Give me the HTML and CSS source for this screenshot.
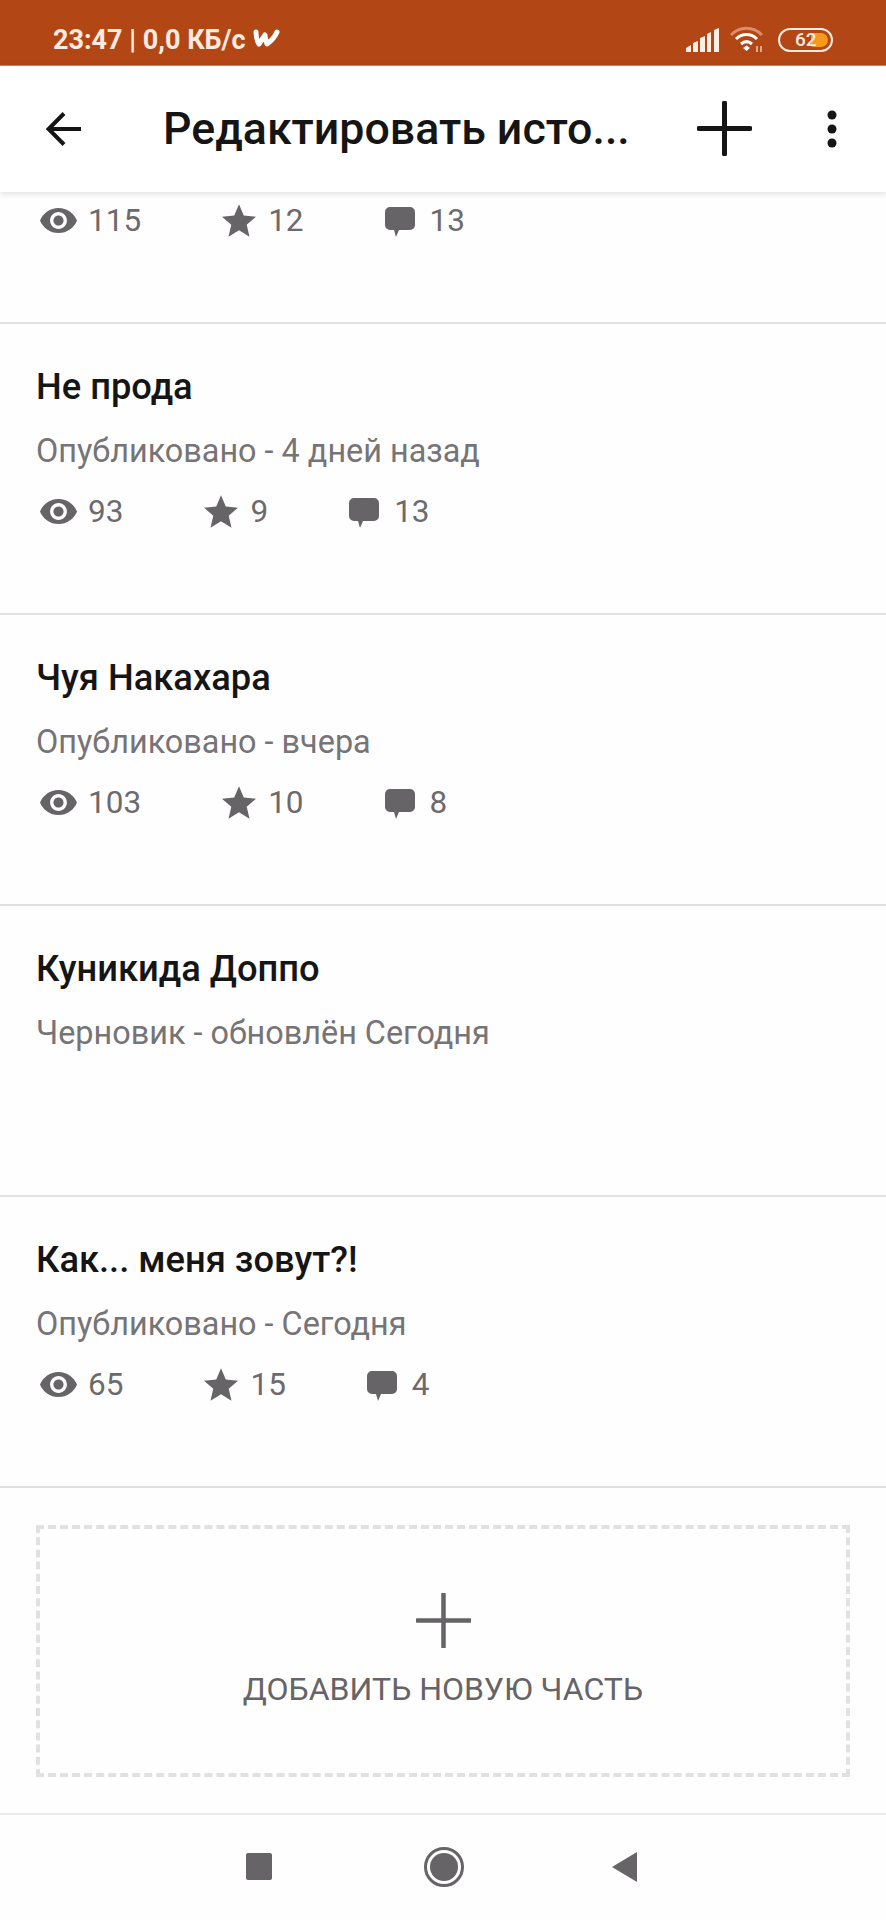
FILE: index.html
```html
<!DOCTYPE html>
<html lang="ru">

<head>
    <meta charset="UTF-8">
    <meta name="viewport" content="width=device-width, initial-scale=1.0">
    <title>Редактировать историю</title>
    <link rel="stylesheet" href="styles.css">
</head>

<body>

    <svg class="sprite" aria-hidden="true">
        <symbol id="eye" viewBox="1 4.5 22 15">
            <path d="M12 4.5C7 4.5 2.73 7.61 1 12c1.73 4.39 6 7.5 11 7.5s9.27-3.11 11-7.5c-1.73-4.39-6-7.5-11-7.5zM12 17c-2.76 0-5-2.24-5-5s2.24-5 5-5 5 2.24 5 5-2.24 5-5 5zm0-8c-1.66 0-3 1.34-3 3s1.34 3 3 3 3-1.34 3-3-1.34-3-3-3z"/>
        </symbol>
        <symbol id="star" viewBox="2 2 20 19">
            <path d="M12 17.27L18.18 21l-1.64-7.03L22 9.24l-7.19-.61L12 2 9.19 8.63 2 9.24l5.46 4.73L5.82 21z"/>
        </symbol>
        <symbol id="comment" viewBox="0 0 30 30">
            <path d="M5 0h20a5 5 0 0 1 5 5v13a5 5 0 0 1-5 5H14l-3 7-2-7H5a5 5 0 0 1-5-5V5a5 5 0 0 1 5-5z"/>
        </symbol>
    </svg>

    <!-- Status bar -->
    <div class="status-bar">
        <div class="status-left">
            <span>23:47 | 0,0 КБ/с</span>
            <svg class="logo" viewBox="0 0 27 18"><path d="M3 3c0 5 1 9 3 12 2-3 4-6 6-9 0 3 1 6 2 9 4-3 8-7 10-12" fill="none" stroke="#fff" stroke-width="5" stroke-linejoin="round" stroke-linecap="round"/></svg>
        </div>
        <div class="status-right">
            <svg class="signal" viewBox="0 0 33 24">
                <path d="M0 24v-4l5-3v7zM7 24v-9l5-2v11zM14 24V10l5-2v16zM21 24V6l4-2v20zM28 24V2l5-2v24z" fill="#fbeee4"/>
            </svg>
            <svg class="wifi" viewBox="0 0 33 28">
                <path d="M1 9c9-9 22-9 31 0" fill="none" stroke="#d98f6e" stroke-width="3"/>
                <path d="M6 13c6-6 15-6 21 0M11 18c3.500-3 7.500-3 11 0" fill="none" stroke="#fff" stroke-width="3"/>
                <path d="M13 22l3.500-2.500 3.500 2.500-3.500 3z" fill="#fff"/>
                <path d="M27 20v6M31 20v6" stroke="#eec9b4" stroke-width="1.500"/>
            </svg>
            <div class="battery">
                <div class="battery-fill"></div>
                <span class="battery-num">62</span>
            </div>
        </div>
    </div>

    <!-- Toolbar -->
    <header class="toolbar">
        <svg class="back-icon" viewBox="0 0 36 34"><path d="M35 17H3M18 1.500L2.500 17 18 32.500" fill="none" stroke="#151515" stroke-width="4"/></svg>
        <h1 class="toolbar-title">Редактировать исто...</h1>
        <svg class="plus-icon" viewBox="0 0 55 55"><path d="M27.500 2v51M2 27.500h51" fill="none" stroke="#151515" stroke-width="5" stroke-linecap="round"/></svg>
        <svg class="more-icon" viewBox="0 0 10 38"><circle cx="5" cy="5" r="4.500"/><circle cx="5" cy="19" r="4.500"/><circle cx="5" cy="33" r="4.500"/></svg>
    </header>

    <!-- Parts -->
    <main class="parts">
        <div class="part part-cut">
            <div class="stats">
                <span class="stat stat-views"><svg><use href="#eye"/></svg>115</span>
                <span class="stat stat-stars"><svg><use href="#star"/></svg>12</span>
                <span class="stat stat-comments"><svg><use href="#comment"/></svg>13</span>
            </div>
        </div>
        <div class="part">
            <div class="part-title">Не прода</div>
            <div class="part-sub">Опубликовано - 4 дней назад</div>
            <div class="stats">
                <span class="stat stat-views"><svg><use href="#eye"/></svg>93</span>
                <span class="stat stat-stars"><svg><use href="#star"/></svg>9</span>
                <span class="stat stat-comments"><svg><use href="#comment"/></svg>13</span>
            </div>
        </div>
        <div class="part">
            <div class="part-title">Чуя Накахара</div>
            <div class="part-sub">Опубликовано - вчера</div>
            <div class="stats">
                <span class="stat stat-views"><svg><use href="#eye"/></svg>103</span>
                <span class="stat stat-stars"><svg><use href="#star"/></svg>10</span>
                <span class="stat stat-comments"><svg><use href="#comment"/></svg>8</span>
            </div>
        </div>
        <div class="part">
            <div class="part-title">Куникида Доппо</div>
            <div class="part-sub">Черновик - обновлён Сегодня</div>
        </div>
        <div class="part">
            <div class="part-title">Как... меня зовут?!</div>
            <div class="part-sub">Опубликовано - Сегодня</div>
            <div class="stats">
                <span class="stat stat-views"><svg><use href="#eye"/></svg>65</span>
                <span class="stat stat-stars"><svg><use href="#star"/></svg>15</span>
                <span class="stat stat-comments"><svg><use href="#comment"/></svg>4</span>
            </div>
        </div>

        <div class="add-part">
            <svg class="add-icon" viewBox="0 0 55 55"><path d="M27.500 1v53M1 27.500h53" fill="none" stroke="#666466" stroke-width="4.500" stroke-linecap="round"/></svg>
            <div class="add-label">ДОБАВИТЬ НОВУЮ ЧАСТЬ</div>
        </div>
    </main>

    <!-- Android nav bar -->
    <footer class="nav-bar">
        <svg class="nav-square" viewBox="0 0 26 27"><rect width="26" height="27" rx="2"/></svg>
        <svg class="nav-home" viewBox="0 0 40 40"><circle cx="20" cy="20" r="18.500" fill="none" stroke="#666466" stroke-width="3"/><circle cx="20" cy="20" r="14"/></svg>
        <svg class="nav-back" viewBox="0 0 26 30"><path d="M26 0v30L1 15z" stroke-linejoin="round"/></svg>
    </footer>

</body>

</html>
```

FILE: styles.css
```css
* {
    box-sizing: border-box;
}

html,
body {
    margin: 0;
    padding: 0;
}

body {
    width: 886px;
    height: 1920px;
    display: flex;
    flex-direction: column;
    overflow: hidden;
    font-family: Roboto, "Noto Sans", sans-serif;
    background-color: #fffeff;
}

.sprite {
    display: none;
}

/* Status bar */
.status-bar {
    height: 66px;
    flex: none;
    display: flex;
    justify-content: space-between;
    align-items: center;
    padding: 15px 53px 0 53px;
    background-color: #b24715;
    border-bottom: 1px solid #d2835f;
    color: #fdebe0;
    font-size: 27px;
    font-weight: 700;
}

.status-left {
    display: flex;
    align-items: center;
    gap: 7px;
}

.logo {
    width: 27px;
    height: 18px;
    margin-top: -4px;
}

.status-right {
    display: flex;
    align-items: center;
}

.signal {
    width: 33px;
    height: 24px;
    margin-right: 11px;
}

.wifi {
    width: 33px;
    height: 28px;
    margin-right: 15px;
}

.battery {
    position: relative;
    width: 55px;
    height: 24px;
    border: 2px solid #fdebe0;
    border-radius: 12px;
}

.battery-fill {
    position: absolute;
    top: 3px;
    bottom: 3px;
    left: 31px;
    right: 3px;
    background-color: #f59a1b;
    border-radius: 2px 8px 8px 2px;
}

.battery-num {
    position: absolute;
    top: 0;
    left: 15px;
    font-size: 19px;
    line-height: 20px;
    font-weight: 500;
    color: #fdebe0;
}

/* Toolbar */
.toolbar {
    height: 126px;
    flex: none;
    display: flex;
    align-items: center;
    position: relative;
    padding-left: 46px;
    background-color: #fff;
    box-shadow: 0 2px 6px rgba(0, 0, 0, 0.12);
}

.back-icon {
    width: 36px;
    height: 34px;
    margin-right: 81px;
}

.toolbar-title {
    width: 534px;
    margin: 0;
    font-size: 44.7px;
    font-weight: 500;
    color: #151515;
    white-space: nowrap;
}

.plus-icon {
    width: 55px;
    height: 55px;
    margin-right: 75px;
    margin-top: -2px;
}

.more-icon {
    width: 10px;
    height: 38px;
    fill: #151515;
}

/* Parts */
.parts {
    flex: 1;
}

.part {
    height: 291px;
    padding: 38px 36px 0;
    border-bottom: 2px solid #e2e1e2;
}

.part-cut {
    height: 132px;
    padding-top: 4px;
}

.part-title {
    height: 50px;
    font-size: 36.3px;
    line-height: 50px;
    font-weight: 500;
    color: #151515;
}

.part-sub {
    height: 38px;
    margin-top: 20px;
    margin-bottom: 23px;
    font-size: 32.4px;
    line-height: 38px;
    color: #767476;
}

.stats {
    display: flex;
    align-items: center;
    height: 36px;
    margin-top: 6px;
    padding-left: 4px;
    font-size: 31.5px;
    color: #6c6a6c;
}

.stat {
    display: flex;
    align-items: center;
    fill: #666466;
}

.stat-views svg {
    width: 37px;
    height: 27px;
    margin-right: 11px;
}

.stat-stars svg {
    width: 34px;
    height: 33px;
    margin-right: 12px;
}

.stat-comments svg {
    width: 30px;
    height: 30px;
    margin-right: 15px;
    margin-top: 4px;
}

.stat-views {
    margin-right: 81px;
}

.stat-stars {
    margin-right: 81px;
}

/* Add new part */
.add-part {
    height: 252px;
    margin: 37px 36px 0;
    display: flex;
    flex-direction: column;
    align-items: center;
    padding-top: 64px;
    border: 4px dashed #e2e1e2;
}

.add-icon {
    width: 55px;
    height: 55px;
}

.add-label {
    margin-top: 22px;
    font-size: 32px;
    color: #666466;
}

/* Nav bar */
.nav-bar {
    height: 107px;
    flex: none;
    display: flex;
    align-items: center;
    justify-content: center;
    padding: 0 4px 2px 0;
    border-top: 2px solid #ebeaeb;
    fill: #666466;
}

.nav-square {
    width: 26px;
    height: 27px;
    margin-right: 152px;
}

.nav-home {
    width: 40px;
    height: 40px;
    margin-right: 147px;
}

.nav-back {
    width: 26px;
    height: 30px;
}
```
